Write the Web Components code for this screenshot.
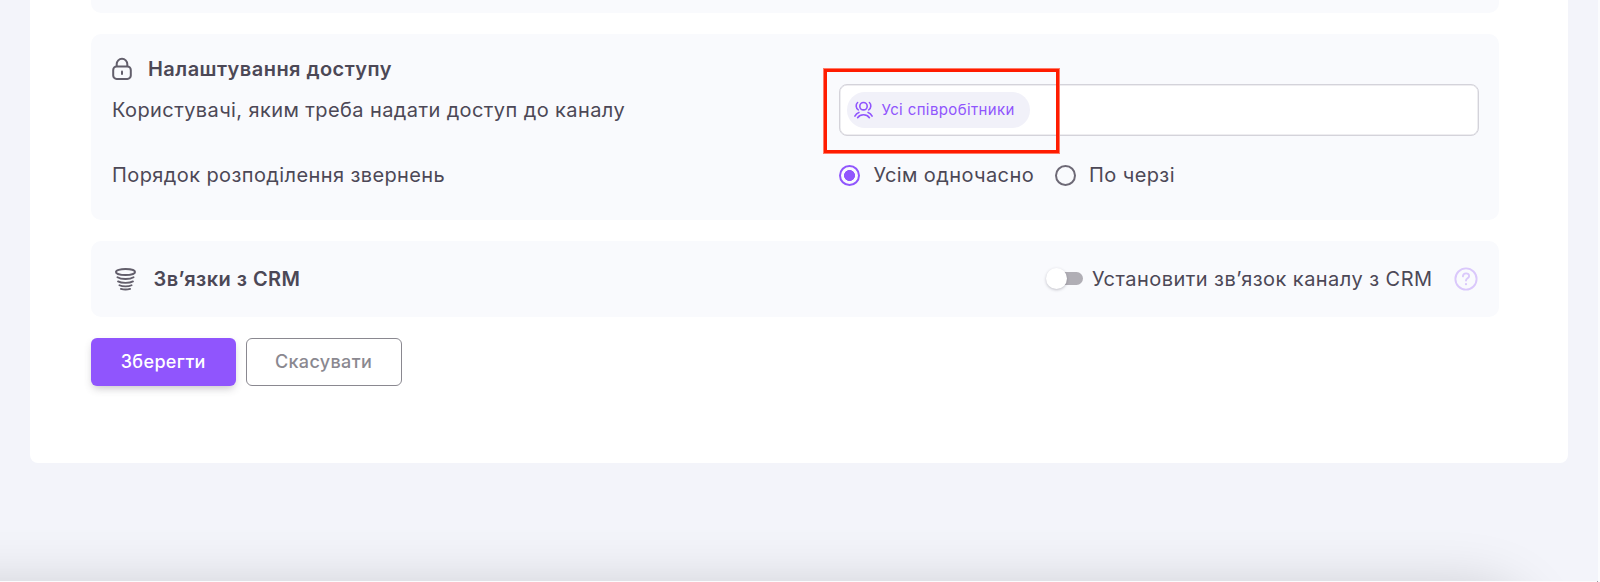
<!DOCTYPE html>
<html lang="uk">
<head>
<meta charset="UTF-8">
<title>Налаштування каналу</title>
<style>
  html,body{ margin:0; height:100%; }
  body{
    background:#f3f4fa; color:#4c4856; overflow:hidden;
    font:400 20px/26px Inter,"Liberation Sans",sans-serif;
    letter-spacing:.4px;
    --accent:#9055fd; --panel:#f9fafd; --muted:#8a8890;
  }
</style>
</head>
<body>
<settings-page>
  <settings-panel class="prev"></settings-panel>

  <settings-panel class="access">
    <panel-title>
      <svg slot="icon" width="20" height="23" viewBox="0 0 20 23" fill="none" stroke="#625e6b" stroke-width="2">
        <rect x="1.2" y="9.5" width="17.6" height="12.4" rx="3.4"/>
        <path d="M4.7 9.5V7.1a5.3 5.3 0 0 1 10.6 0V9.5"/>
        <path d="M10 14.5v2.4" stroke-linecap="round"/>
      </svg>
      Налаштування доступу
    </panel-title>
    <form-row style="--row-h:54px">
      <span slot="label">Користувачі, яким треба надати доступ до каналу</span>
      <chip-field><user-chip>Усі співробітники</user-chip></chip-field>
    </form-row>
    <form-row style="--row-h:77px">
      <span slot="label">Порядок розподілення звернень</span>
      <radio-item checked>Усім одночасно</radio-item>
      <radio-item>По черзі</radio-item>
    </form-row>
  </settings-panel>

  <settings-panel class="crm">
    <panel-title style="--gap:17px">
      <svg slot="icon" width="24" height="24" viewBox="0 0 24 24" fill="none" stroke="#625e6b" stroke-width="1.8" stroke-linecap="round">
        <ellipse cx="12.5" cy="5" rx="9.6" ry="3"/>
        <path d="M4.4 10.2c3.8 2.4 12.4 2.4 16.2 0"/>
        <path d="M5 14.4c3.6 2 11.4 2 15 0"/>
        <path d="M6.4 18.3c3.2 1.5 9 1.5 12.2 0"/>
        <path d="M7.9 21.8c2.6.8 6.6.8 9.2 0"/>
      </svg>
      Зв’язки з CRM
    </panel-title>
    <toggle-switch>Установити зв’язок каналу з CRM</toggle-switch>
    <help-icon></help-icon>
  </settings-panel>

  <action-button slot="actions" variant="primary">Зберегти</action-button>
  <action-button slot="actions">Скасувати</action-button>
</settings-page>

<script>
(function(){
  function define(name, html){
    customElements.define(name, class extends HTMLElement {
      constructor(){
        super();
        this.attachShadow({mode:'open'});
        this.shadowRoot.innerHTML = html;
      }
    });
  }

  // page frame: white sheet, panels, actions, shadow of the bottom bar
  define('settings-page', `
    <style>
      :host{ display:flex; flex-direction:column; height:582px; box-sizing:border-box;
        border-right:2px solid #fafbfd; overflow:hidden; position:relative; }
      .sheet{
        box-sizing:border-box; flex:none; height:463px; margin:0 30px;
        padding:0 69px 0 61px; background:#fff; border-radius:0 0 8px 8px;
      }
      .actions{ display:flex; gap:10px; margin-top:20.5px; }
      .bar{ flex:none; margin:118px 66px 0 -120px; height:80px; border-radius:0 60px 0 0;
        box-shadow:0 5px 56px rgba(0,0,0,.17); }
      .edge{ flex:none; height:1px; margin-top:-80px; background:#fbfbfd; position:relative; }
      .corner{ position:absolute; right:-2px; bottom:0; width:3px; height:3px;
        background:linear-gradient(135deg,transparent 45%,#3f3d47 55%); }
      ::slotted(.prev){ height:13px; border-radius:0 0 10px 10px; }
      ::slotted(.access){ margin-top:20.5px; height:186.5px; padding:21px 20px 0 21px; }
      ::slotted(.crm){ margin-top:20.5px; height:76.5px; padding:0 21.5px 0 21.5px;
        display:flex; align-items:center; }
    </style>
    <div class="sheet">
      <slot></slot>
      <div class="actions"><slot name="actions"></slot></div>
    </div>
    <div class="bar"></div>
    <div class="edge"></div>
    <div class="corner"></div>
  `);

  define('settings-panel', `
    <style>
      :host{ display:block; box-sizing:border-box; background:var(--panel); border-radius:10px; }
    </style>
    <slot></slot>
  `);

  define('panel-title', `
    <style>
      :host{ display:flex; align-items:center; gap:var(--gap,16px); height:28px;
        font-weight:600; letter-spacing:.45px; white-space:nowrap; flex:1; }
      ::slotted(svg){ display:block; flex:none; }
    </style>
    <slot name="icon"></slot><span><slot></slot></span>
  `);

  define('form-row', `
    <style>
      :host{ display:grid; grid-template-columns:727px 1fr; align-items:center;
        height:var(--row-h); white-space:nowrap; }
      .field{ display:flex; gap:20.5px; }
    </style>
    <slot name="label"></slot>
    <div class="field"><slot></slot></div>
  `);

  define('chip-field', `
    <style>
      :host{ display:flex; align-items:center; flex:1; box-sizing:border-box; height:52px;
        padding:0 7px; background:#fff; border:1px solid #d4d3da; border-radius:8px;
        box-shadow:inset 0 0 0 .5px #dddce2; position:relative; }
      /* red callout lying over the field */
      .mark{ position:absolute; left:-16px; top:-16px; width:229px; height:78px;
        border:3.5px solid #ff1c00; outline:.5px solid #ff7a68; }
    </style>
    <slot></slot><div class="mark"></div>
  `);

  define('user-chip', `
    <style>
      :host{ display:flex; align-items:center; gap:8.5px; box-sizing:border-box; height:36px;
        width:183px; padding-left:7px; border-radius:18px; background:#f1f1f9;
        color:var(--accent); font-size:15px; letter-spacing:.38px; }
      svg{ display:block; flex:none; }
    </style>
    <svg width="19" height="18" viewBox="0 0 19 18" fill="none" stroke="currentColor" stroke-width="1.6" stroke-linecap="round">
      <circle cx="9.5" cy="5.2" r="3.7"/>
      <path d="M3.6 1.5C1.5 3.2 1.7 7.5 4.3 8.9M15.4 1.5c2.1 1.7 1.9 6-.7 7.400"/>
      <path d="M3.6 16.7c2.700-3.900 9.100-3.900 11.800 0"/>
      <path d="M.9 15.100c.9-1.900 2.200-3.200 4-3.700M18.1 15.100c-.9-1.900-2.200-3.200-4-3.700"/>
    </svg>
    <slot></slot>
  `);

  define('radio-item', `
    <style>
      :host{ display:flex; align-items:center; gap:13.5px; }
      i{ box-sizing:border-box; width:21px; height:21px; border:2px solid #6d6976; border-radius:50%; }
      :host([checked]) i{
        border-color:var(--accent);
        background:radial-gradient(circle,var(--accent) 5.2px,transparent 5.8px);
      }
    </style>
    <i></i><span><slot></slot></span>
  `);

  define('toggle-switch', `
    <style>
      :host{ display:flex; align-items:center; gap:9.5px; white-space:nowrap; letter-spacing:.45px; }
      .track{ display:flex; align-items:center; width:31px; height:13px; border-radius:7px; background:#b0aeb5; }
      .knob{ flex:none; width:21px; height:21px; margin-left:-6px; border-radius:50%; background:#fff;
        box-shadow:0 1px 3px rgba(60,55,75,.3); }
    </style>
    <div class="track"><div class="knob"></div></div>
    <span><slot></slot></span>
  `);

  define('help-icon', `
    <style>
      :host{ display:block; margin-left:21px; color:#dac8fb; }
      svg{ display:block; }
    </style>
    <svg width="24" height="24" viewBox="0 0 24 24" fill="none" stroke="currentColor" stroke-width="1.9" stroke-linecap="round" stroke-linejoin="round">
      <circle cx="12" cy="12" r="10.6"/>
      <path d="M8.9 9.4c.2-4.2 6.4-3.9 6.2-.2-.1 2.1-3.1 2.1-3.1 4.3"/>
      <path d="M12 17.1v.1" stroke-width="2.2"/>
    </svg>
  `);

  define('action-button', `
    <style>
      :host{ display:block; }
      button{ box-sizing:border-box; display:block; width:156px; height:48.5px; padding:0;
        border:1.3px solid var(--muted); border-radius:6px; background:#fff; color:var(--muted);
        font:500 18px/26px Inter,"Liberation Sans",sans-serif; letter-spacing:.35px; }
      :host([variant="primary"]) button{
        width:144.5px; border:0; background:var(--accent); color:#fff;
        box-shadow:0 4px 8px -2px rgba(58,53,65,.3);
      }
    </style>
    <button><slot></slot></button>
  `);
})();
</script>
</body>
</html>
